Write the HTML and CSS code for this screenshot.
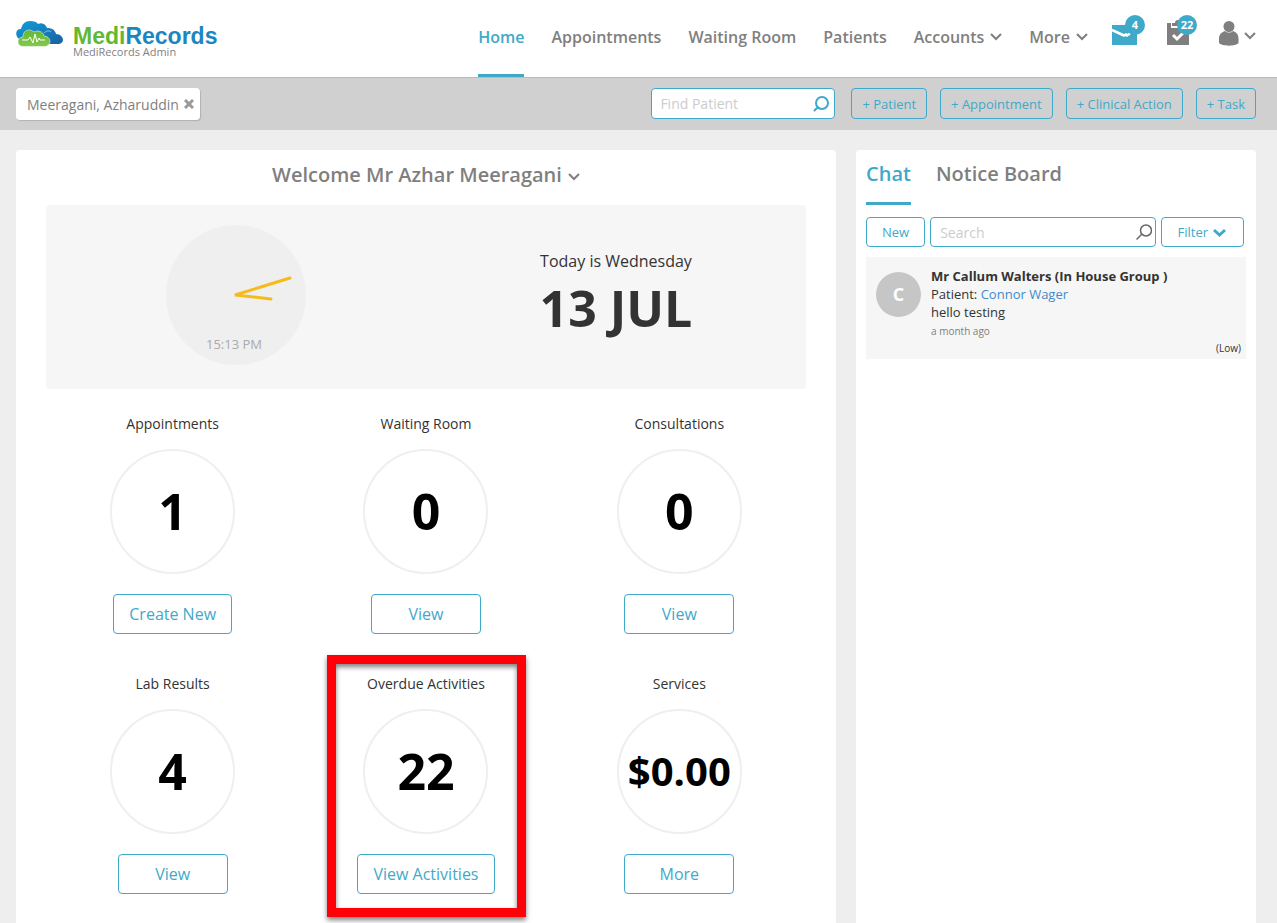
FILE: index.html
```html
<!DOCTYPE html>
<html lang="en">
<head>
  <meta charset="UTF-8" />
  <meta name="viewport" content="width=device-width, initial-scale=1.0"/>
  <title>MediRecords</title>
  <link rel="stylesheet" href="styles.css">
</head>
<body>
  <header class="header">
    <a class="logo" href="#">
      <svg class="logo-cloud" width="47" height="26" viewBox="0 0 47 26">
        <defs>
          <linearGradient id="blue" x1="0" y1="0" x2="1" y2="1">
            <stop offset="0" stop-color="#0f9fdc"/>
            <stop offset="1" stop-color="#1b5f9e"/>
          </linearGradient>
          <linearGradient id="green" x1="0" y1="0" x2="0" y2="1">
            <stop offset="0" stop-color="#62b832"/>
            <stop offset="1" stop-color="#84c850"/>
          </linearGradient>
        </defs>
        <path fill="url(#blue)" d="M3 18C-1 15-1 8 5 8C6 3 9 0 14 0C18 0 21 1 22 3C27 1 30 4 31 7C36 7 39 9 40 13C44 13 47 16 47 19C47 21 45 23 42 23H12Z"/>
        <path fill="none" stroke="#8cc4e4" stroke-width="1" d="M28 12C30 10 33 9 35 11"/>
        <path fill="url(#green)" stroke="#fff" stroke-width="0.500" d="M7 25.500C4 25.500 2 23.500 2 21C2 18 4 16 7 16C7 12 9 9 13 9C15 9 17 10 18 11C21 9 27 10 28 15C31 15 34 17 34 20.500C34 23 32 25.500 28 25.500Z"/>
        <path fill="none" stroke="#fff" stroke-width="1" stroke-linejoin="round" d="M6 19H12L14 16L17 22L19 13L21 21L23 17L24 19H29"/>
      </svg>
      <span class="logo-text">
        <span class="logo-name"><span class="green">Medi</span><span class="blue">Records</span></span>
        <span class="logo-sub">MediRecords Admin</span>
      </span>
    </a>

    <nav class="nav">
      <a class="active" href="#">Home</a>
      <a href="#">Appointments</a>
      <a href="#">Waiting Room</a>
      <a href="#">Patients</a>
      <a href="#">Accounts
        <svg class="chevron" width="12" height="8" viewBox="0 0 12 8"><path d="M1 1L6 6L11 1"/></svg>
      </a>
      <a href="#">More
        <svg class="chevron" width="12" height="8" viewBox="0 0 12 8"><path d="M1 1L6 6L11 1"/></svg>
      </a>
    </nav>

    <div class="tools">
      <button class="tool" type="button" aria-label="Messages">
        <svg width="25" height="22" viewBox="0 0 25 22">
          <path fill="#3fa9c9" d="M0 1H25V21H0Z"/>
          <path fill="none" stroke="#fff" stroke-width="2.500" d="M0 6L12 11.500L14 10.500L15 11.500L18 9.500"/>
        </svg>
        <span class="badge">4</span>
      </button>
      <button class="tool" type="button" aria-label="Activities">
        <svg width="22" height="25" viewBox="0 0 22 25">
          <path fill="#7f7f7f" d="M0 2H4V7H18V2H22V24H0Z"/>
          <path fill="#7f7f7f" d="M5 5V2H8C8 0 9 -1 11 -1C13 -1 14 0 14 2H17V5Z"/>
          <path fill="none" stroke="#fff" stroke-width="3" d="M6 14L10 18L16 12"/>
        </svg>
        <span class="badge">22</span>
      </button>
      <button class="tool user" type="button" aria-label="Account">
        <svg width="20" height="25" viewBox="0 0 20 25">
          <circle cx="10" cy="5.500" r="5.500" fill="#7f7f7f"/>
          <path fill="#7f7f7f" d="M0 22V18C0 13 3 11 6 10C8 12 12 12 14 10C17 11 19.500 13 19.500 18V22C17 25.500 3 25.500 0 22Z"/>
        </svg>
        <svg class="chevron" width="12" height="8" viewBox="0 0 12 8"><path d="M1 1L6 6L11 1"/></svg>
      </button>
    </div>
  </header>

  <div class="toolbar">
    <div class="patient-tag">
      Meeragani, Azharuddin
      <button class="close" type="button" aria-label="Close">
        <svg width="10" height="10" viewBox="0 0 10 10"><path d="M1 1L9 9M9 1L1 9" stroke="#999" stroke-width="3"/></svg>
      </button>
    </div>
    <div class="search find">
      <input type="text" placeholder="Find Patient" aria-label="Find Patient">
      <svg width="16" height="16" viewBox="0 0 16 16"><path fill="none" stroke="#3fa9c9" stroke-width="2" stroke-linecap="round" d="M1.500 14.500L5 11M9 1A6 6 0 1 1 9 13A6 6 0 1 1 9 1"/></svg>
    </div>
    <div class="actions">
      <button class="btn small" type="button">+ Patient</button>
      <button class="btn small" type="button">+ Appointment</button>
      <button class="btn small" type="button">+ Clinical Action</button>
      <button class="btn small" type="button">+ Task</button>
    </div>
  </div>

  <main class="content">
    <section class="panel dashboard">
      <h1>Welcome Mr Azhar Meeragani
        <svg class="chevron" width="12" height="8" viewBox="0 0 12 8"><path d="M1 1L6 6L11 1"/></svg>
      </h1>

      <div class="today">
        <div class="clock">
          <svg width="140" height="140" viewBox="0 0 140 140">
            <circle cx="70" cy="70" r="70" fill="#efefef"/>
            <path fill="none" stroke="#f6bb1b" stroke-width="3" stroke-linecap="round" d="M124 53L69 70L105 74"/>
          </svg>
          <span class="clock-time">15:13 PM</span>
        </div>
        <div class="date">
          <p class="day">Today is Wednesday</p>
          <p class="day-number">13 JUL</p>
        </div>
      </div>

      <div class="stats">
        <div class="stat">
          <h2>Appointments</h2>
          <div class="circle">1</div>
          <button class="btn" type="button">Create New</button>
        </div>
        <div class="stat">
          <h2>Waiting Room</h2>
          <div class="circle">0</div>
          <button class="btn" type="button">View</button>
        </div>
        <div class="stat">
          <h2>Consultations</h2>
          <div class="circle">0</div>
          <button class="btn" type="button">View</button>
        </div>
        <div class="stat">
          <h2>Lab Results</h2>
          <div class="circle">4</div>
          <button class="btn" type="button">View</button>
        </div>
        <div class="stat highlight">
          <h2>Overdue Activities</h2>
          <div class="circle">22</div>
          <button class="btn" type="button">View Activities</button>
        </div>
        <div class="stat">
          <h2>Services</h2>
          <div class="circle money">$0.00</div>
          <button class="btn" type="button">More</button>
        </div>
      </div>
    </section>

    <aside class="panel chat">
      <div class="tabs">
        <a class="tab active" href="#">Chat</a>
        <a class="tab" href="#">Notice Board</a>
      </div>
      <div class="chat-bar">
        <button class="btn small new" type="button">New</button>
        <div class="search">
          <input type="text" placeholder="Search" aria-label="Search chat">
          <svg width="16" height="16" viewBox="0 0 16 16"><path fill="none" stroke="#666" stroke-width="1.500" stroke-linecap="round" d="M1 15L6 10M10 1A5.500 5.500 0 1 1 10 12A5.500 5.500 0 1 1 10 1"/></svg>
        </div>
        <button class="btn small filter" type="button">Filter
          <svg width="13" height="9" viewBox="0 0 13 9"><path fill="none" stroke="#3fa9c9" stroke-width="3" d="M1 2L6.500 7L12 2"/></svg>
        </button>
      </div>
      <article class="message">
        <div class="avatar">C</div>
        <div class="message-body">
          <p class="from">Mr Callum Walters (In House Group )</p>
          <p>Patient: <a href="#">Connor Wager</a></p>
          <p>hello testing</p>
          <p class="time">a month ago</p>
          <p class="priority">(Low)</p>
        </div>
      </article>
    </aside>
  </main>
</body>
</html>
```

FILE: styles.css
```css
*, *::after {
  box-sizing: border-box;
}

body {
  margin: 0;
  min-height: 100vh;
  display: flex;
  flex-direction: column;
  background: #eee;
  color: #333;
  font-family: "Open Sans", sans-serif;
  font-size: 14px;
}

h1, h2, p {
  margin: 0;
}

a {
  color: #428bca;
  text-decoration: none;
}

svg {
  display: block;
}

button, input {
  font-family: inherit;
}

button {
  cursor: pointer;
}

.chevron path {
  fill: none;
  stroke: #7f7f7f;
  stroke-width: 2;
}

/* Header */
.header {
  display: flex;
  height: 78px;
  padding: 0 21px 0 16px;
  background: #fff;
  border-bottom: 1px solid #bbb;
}

.logo {
  display: flex;
  align-items: flex-start;
  gap: 10px;
  padding-top: 21px;
}

.logo-text {
  display: flex;
  flex-direction: column;
  padding-top: 5px;
}

.logo-name {
  font: bold 23px/21px "Liberation Sans", Arial, sans-serif;
}

.green {
  color: #62b832;
}

.blue {
  color: #1c86c0;
}

.logo-sub {
  font-size: 11px;
  line-height: 10px;
  color: #7f7f7f;
}

.nav {
  display: flex;
  gap: 27px;
  margin-left: auto;
}

.nav a {
  display: flex;
  align-items: center;
  gap: 6px;
  padding-bottom: 1px;
  border-bottom: 3px solid transparent;
  color: #7f7f7f;
  font-size: 16px;
  font-weight: 600;
}

.nav a.active {
  color: #3fa9c9;
  border-color: #3fa9c9;
}

.tools {
  display: flex;
  align-items: flex-start;
  gap: 30px;
  padding-top: 21px;
  margin-left: 24px;
}

.tool {
  position: relative;
  display: flex;
  align-items: flex-end;
  height: 25px;
  padding: 0;
  border: none;
  background: none;
}

.tool svg {
  overflow: visible;
}

.tool.user {
  align-items: center;
  gap: 5px;
}

.tool .chevron {
  margin-top: 5px;
}

.badge {
  position: absolute;
  top: -6px;
  right: -8px;
  width: 20px;
  height: 20px;
  border-radius: 50%;
  background: #3fa9c9;
  color: #fff;
  font-size: 11px;
  font-weight: 700;
  line-height: 20px;
  text-align: center;
}

/* Toolbar */
.toolbar {
  display: flex;
  align-items: flex-start;
  height: 52px;
  padding: 10px 21px 0 16px;
  background: #d0d0d0;
}

.patient-tag {
  display: flex;
  align-items: center;
  gap: 5px;
  height: 32px;
  padding: 0 6px 0 11px;
  background: #fff;
  border-radius: 4px;
  box-shadow: 1px 1px 1px rgba(0, 0, 0, 0.15);
  color: #7f7f7f;
}

.close {
  display: flex;
  padding: 0;
  border: none;
  background: none;
}

.search {
  display: flex;
  align-items: center;
  height: 30px;
  padding: 0 4px 0 9px;
  background: #fff;
  border: 1px solid #3fa9c9;
  border-radius: 4px;
}

.search input {
  flex: 1;
  min-width: 0;
  padding: 0;
  border: none;
  outline: none;
  background: none;
  font-size: 14px;
}

.search input::placeholder {
  color: #ccc;
}

.find {
  width: 184px;
  height: 31px;
  padding: 0 5px 0 8px;
  margin-left: auto;
}

.actions {
  display: flex;
  gap: 13px;
  margin-left: 16px;
}

.btn {
  min-width: 110px;
  height: 40px;
  padding: 0 15px;
  background: transparent;
  border: 1px solid #3fa9c9;
  border-radius: 4px;
  color: #3fa9c9;
  font-size: 16px;
}

.btn.small {
  min-width: 0;
  height: 31px;
  padding: 0 10px;
  font-size: 13px;
}

/* Content */
.content {
  flex: 1;
  display: grid;
  grid-template-columns: 1fr 400px;
  gap: 20px;
  padding: 20px 21px 0 16px;
}

.panel {
  background: #fff;
  border-radius: 4px 4px 0 0;
}

.dashboard {
  padding: 10px 30px 29px;
}

h1 {
  display: flex;
  justify-content: center;
  align-items: center;
  gap: 6px;
  height: 28px;
  color: #7f7f7f;
  font-size: 20px;
  font-weight: 600;
}

h1 .chevron {
  margin-top: 5px;
}

.today {
  display: grid;
  grid-template-columns: 1fr 1fr;
  justify-items: center;
  height: 184px;
  margin-top: 17px;
  background: #f6f6f6;
  border-radius: 4px;
}

.clock {
  position: relative;
  height: 140px;
  margin-top: 20px;
}

.clock-time {
  position: absolute;
  bottom: 12px;
  left: 0;
  width: 136px;
  color: #aaa;
  font-size: 13px;
  text-align: center;
}

.date {
  padding-top: 44px;
  text-align: center;
}

.day {
  font-size: 16px;
  line-height: 24px;
}

.day-number {
  font-size: 50px;
  font-weight: 700;
  line-height: 70px;
}

.stats {
  display: grid;
  grid-template-columns: repeat(3, 1fr);
  row-gap: 40px;
  padding-top: 25px;
}

.stat {
  position: relative;
  display: flex;
  flex-direction: column;
  align-items: center;
  gap: 20px;
}

.stat h2 {
  height: 15px;
  font-size: 14px;
  font-weight: 400;
  line-height: 20px;
}

.circle {
  display: flex;
  justify-content: center;
  align-items: center;
  width: 125px;
  height: 125px;
  padding-bottom: 2px;
  border: 2px solid #efefef;
  border-radius: 50%;
  color: #000;
  font-size: 50px;
  font-weight: 700;
}

.circle.money {
  font-size: 40px;
}

.highlight::after {
  content: "";
  position: absolute;
  top: -19px;
  bottom: -23px;
  left: 50%;
  width: 199px;
  margin-left: -99px;
  border: 9px solid #ff0008;
  box-shadow: 0 3px 5px rgba(0, 0, 0, 0.5), inset 0 3px 5px rgba(0, 0, 0, 0.5);
  pointer-events: none;
}

/* Chat */
.chat {
  padding: 10px;
}

.tabs {
  display: flex;
  gap: 25px;
}

.tab {
  height: 45px;
  border-bottom: 3px solid transparent;
  color: #7f7f7f;
  font-size: 20px;
  font-weight: 600;
  line-height: 28px;
}

.tab.active {
  color: #3fa9c9;
  border-color: #3fa9c9;
}

.chat-bar {
  display: flex;
  gap: 5px;
  padding: 12px 2px 10px 0;
}

.chat-bar .btn {
  height: 30px;
  padding: 0 15px;
}

.chat-bar .search {
  flex: 1;
  padding-right: 3px;
}

.chat-bar .filter {
  display: flex;
  align-items: center;
  gap: 5px;
  padding-right: 17px;
}

.message {
  display: flex;
  gap: 10px;
  padding: 10px 5px 4px 10px;
  background: #f6f6f6;
}

.avatar {
  width: 45px;
  height: 45px;
  margin-top: 5px;
  border-radius: 50%;
  background: #c6c6c6;
  color: #fff;
  font-size: 18px;
  font-weight: 700;
  line-height: 45px;
  text-align: center;
}

.message-body {
  flex: 1;
  font-size: 13px;
  line-height: 18px;
}

.from {
  font-weight: 700;
}

.time {
  color: #7f7f7f;
  font-size: 10px;
  line-height: 20px;
}

.priority {
  font-size: 10px;
  line-height: 14px;
  text-align: right;
}
```
